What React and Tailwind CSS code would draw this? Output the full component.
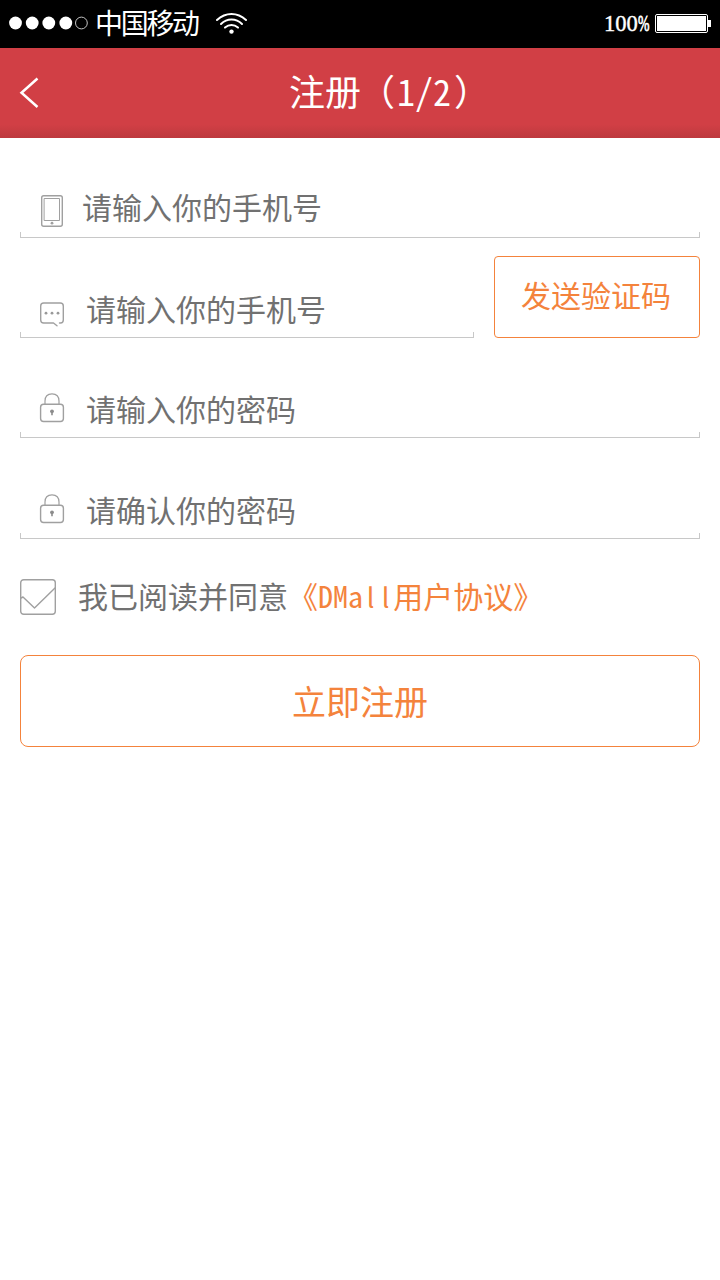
const stroke = { fill: "none", stroke: "#a0a0a0", strokeWidth: 1.4, strokeLinecap: "round", strokeLinejoin: "round" };

function PhoneIcon() {
  return (
    <svg className="h-[50px] w-[62px] shrink-0" viewBox="20 182 62 50">
      <rect x="41.7" y="195.7" width="20.6" height="30.6" rx="2" {...stroke} />
      <rect x="44.5" y="198.5" width="15" height="22" {...stroke} strokeWidth="1" />
      <circle cx="52" cy="223.2" r="1.4" fill="#a0a0a0" />
    </svg>
  );
}

function MessageIcon() {
  return (
    <svg className="h-[46px] w-[66px] shrink-0" viewBox="20 286 66 46">
      <path d="M59.5 323H60.5Q63.3 323 63.3 320V306Q63.3 303 60.3 303H43.7Q40.7 303 40.7 306V320Q40.7 323 43.7 323H53.5L57 325.7" {...stroke} />
      <circle cx="46" cy="313.2" r="1.4" fill="#999" />
      <circle cx="52" cy="313.2" r="1.4" fill="#999" />
      <circle cx="58" cy="313.2" r="1.4" fill="#999" />
    </svg>
  );
}

function LockIcon() {
  return (
    <svg className="h-[46px] w-[66px] shrink-0" viewBox="20 386 66 46">
      <path d="M45 404V401Q45 393.8 52 393.8Q59 393.8 59 401V404" {...stroke} strokeWidth="1.2" />
      <rect x="40.6" y="404.3" width="22.8" height="17.2" rx="3" {...stroke} />
      <circle cx="52" cy="411.3" r="1.9" fill="#8c8c8c" />
      <path d="M52 411V415.2" stroke="#8c8c8c" strokeWidth="1.6" />
    </svg>
  );
}

function Field({ icon, label, rowClass = "h-[46px]" }) {
  return (
    <div className="flex grow flex-col">
      <div className={`flex items-center text-[30px] leading-none text-[#717171] ${rowClass}`}>
        {icon}
        <span className="pb-[2px] whitespace-nowrap">{label}</span>
      </div>
      <div className="h-1.5 border-x border-b border-[#c8c8c8]" />
    </div>
  );
}

function StatusBar() {
  return (
    <div className="flex h-12 items-center justify-between bg-black pr-[9px] pb-[2px] pl-[9px] text-white">
      <div className="flex items-center">
        <svg className="h-4 w-20" viewBox="0 0 80 16">
          <circle cx="6.5" cy="8" r="6.4" fill="white" />
          <circle cx="23.2" cy="8" r="6.4" fill="white" />
          <circle cx="39.8" cy="8" r="6.4" fill="white" />
          <circle cx="56.8" cy="8" r="6.4" fill="white" />
          <circle cx="72.4" cy="8" r="5.9" fill="none" stroke="#c4c4c4" />
        </svg>
        <span className="ml-[6px] pb-[2px] text-[28px] leading-none font-medium tracking-[-2.3px]">中国移动</span>
        <svg className="ml-[18px] h-[22px] w-8" viewBox="216 12 32 22">
          <g fill="none" stroke="white" strokeWidth="2" strokeLinecap="round">
            <path d="M217 20Q223.5 14 231.5 14Q239.5 14 246 20" />
            <path d="M221 24Q225.5 19.5 231.5 19.5Q237.5 19.5 242 24" />
            <path d="M225 27.6Q228 25 231.5 25Q235 25 238 27.6" />
          </g>
          <circle cx="231.5" cy="31.6" r="2.2" fill="white" />
        </svg>
      </div>
      <div className="flex items-center">
        <span className="w-[34px] origin-left scale-x-[0.98] font-['Liberation_Serif',serif] text-[23px] leading-none [-webkit-text-stroke:0.4px_white]">100</span>
        <span className="w-[12px] origin-left scale-x-[0.6] font-['Liberation_Serif',serif] text-[23px] leading-none [-webkit-text-stroke:0.8px_white]">%</span>
        <div className="ml-[5px] h-[19px] w-[53px] rounded-[2px] border border-white p-px">
          <div className="h-full bg-white" />
        </div>
        <div className="h-[7px] w-[3px] bg-white" />
      </div>
    </div>
  );
}

export default function App() {
  return (
    <div className="h-[1280px] w-[720px] bg-white font-['Noto_Sans_Mono_CJK_SC','Noto_Sans_CJK_SC',sans-serif]">
      <StatusBar />
      <header className="flex h-[90px] items-center bg-linear-to-b from-[#d13f45] from-85% to-[#bd393e] pl-[18px] text-white">
        <svg className="h-8 w-6" viewBox="18 77 24 32">
          <path d="M37.5 78.5L21.5 92.7L37.5 107" fill="none" stroke="white" strokeWidth="2.5" />
        </svg>
        <h1 className="ml-[247px] pb-[6px] text-[36px] leading-none font-medium whitespace-nowrap">
          注册<span className="-ml-[2px] mr-[2px]">（</span>1/2<span className="ml-[3px]">）</span>
        </h1>
      </header>
      <main className="flex flex-col px-5">
        <div className="flex h-[100px] items-end">
          <Field icon={<PhoneIcon />} label="请输入你的手机号" rowClass="h-[50px]" />
        </div>
        <div className="flex h-[100px] items-end gap-5">
          <Field icon={<MessageIcon />} label="请输入你的手机号" />
          <button className="h-[82px] w-[206px] shrink-0 rounded-[4px] border border-[#f4833c] pr-[2px] pb-1.5 text-[30px] leading-none font-light text-[#f4833c]">
            发送验证码
          </button>
        </div>
        <div className="flex h-[100px] items-end">
          <Field icon={<LockIcon />} label="请输入你的密码" />
        </div>
        <div className="flex h-[101px] items-end">
          <Field icon={<LockIcon />} label="请确认你的密码" />
        </div>
        <label className="mt-10 flex h-9 items-center text-[30px] leading-none text-[#717171]">
          <svg className="h-9 w-9" viewBox="0 0 36 36">
            <rect x="0.7" y="0.7" width="34.6" height="34.6" rx="3" {...stroke} />
            <path d="M1 19L3 18L14.5 29L35 9" {...stroke} />
          </svg>
          <span className="ml-[22px] pb-1 whitespace-nowrap">
            我已阅读并同意
            <span className="text-[#f4833c]">
              《DMa
              <span className="pl-[3.7px] font-['Noto_Sans_CJK_SC'] text-[27px] tracking-[7.5px]">l</span>
              <span className="font-['Noto_Sans_CJK_SC'] text-[27px] tracking-[3.8px]">l</span>
              用户协议》
            </span>
          </span>
        </label>
        <button className="mt-10 h-[92px] rounded-lg border border-[#f4833c] text-[34px] leading-none font-light text-[#f4833c]">
          立即注册
        </button>
      </main>
    </div>
  );
}
